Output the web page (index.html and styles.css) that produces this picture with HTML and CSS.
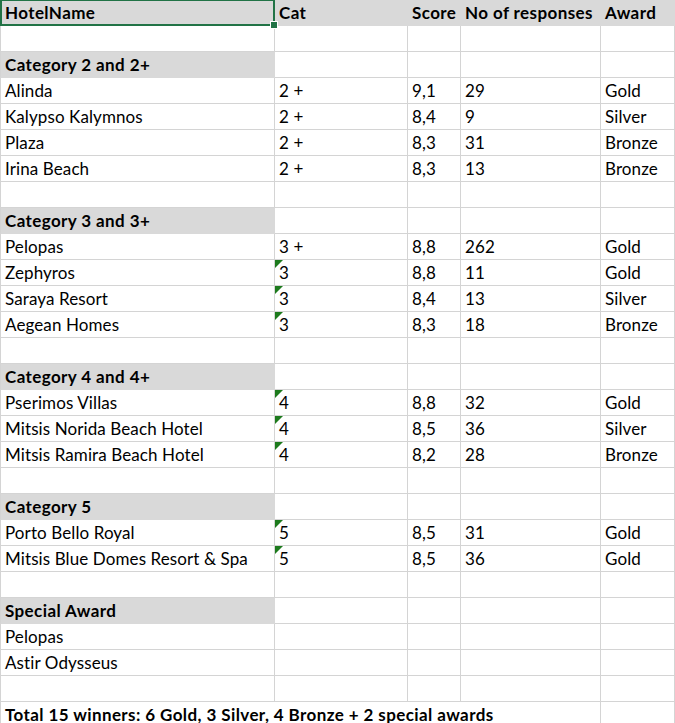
FILE: index.html
```html
<!DOCTYPE html>
<html>
<head>
<meta charset="utf-8">
<link rel="stylesheet" href="styles.css">
</head>
<body>
<div class="sheet">
  <div class="row head">
    <div class="c f b">HotelName</div><div class="c f b">Cat</div><div class="c f b">Score</div><div class="c f b">No of responses</div><div class="c f b">Award</div>
  </div>
  <div class="row"><div class="c"></div><div class="c"></div><div class="c"></div><div class="c"></div><div class="c"></div></div>
  <div class="row"><div class="c f b">Category 2 and 2+</div><div class="c"></div><div class="c"></div><div class="c"></div><div class="c"></div></div>
  <div class="row"><div class="c">Alinda</div><div class="c">2 +</div><div class="c">9,1</div><div class="c">29</div><div class="c">Gold</div></div>
  <div class="row"><div class="c">Kalypso Kalymnos</div><div class="c">2 +</div><div class="c">8,4</div><div class="c">9</div><div class="c">Silver</div></div>
  <div class="row"><div class="c">Plaza</div><div class="c">2 +</div><div class="c">8,3</div><div class="c">31</div><div class="c">Bronze</div></div>
  <div class="row"><div class="c">Irina Beach</div><div class="c">2 +</div><div class="c">8,3</div><div class="c">13</div><div class="c">Bronze</div></div>
  <div class="row"><div class="c"></div><div class="c"></div><div class="c"></div><div class="c"></div><div class="c"></div></div>
  <div class="row"><div class="c f b">Category 3 and 3+</div><div class="c"></div><div class="c"></div><div class="c"></div><div class="c"></div></div>
  <div class="row"><div class="c">Pelopas</div><div class="c">3 +</div><div class="c">8,8</div><div class="c">262</div><div class="c">Gold</div></div>
  <div class="row"><div class="c">Zephyros</div><div class="c t">3</div><div class="c">8,8</div><div class="c">11</div><div class="c">Gold</div></div>
  <div class="row"><div class="c">Saraya Resort</div><div class="c t">3</div><div class="c">8,4</div><div class="c">13</div><div class="c">Silver</div></div>
  <div class="row"><div class="c">Aegean Homes</div><div class="c t">3</div><div class="c">8,3</div><div class="c">18</div><div class="c">Bronze</div></div>
  <div class="row"><div class="c"></div><div class="c"></div><div class="c"></div><div class="c"></div><div class="c"></div></div>
  <div class="row"><div class="c f b">Category 4 and 4+</div><div class="c"></div><div class="c"></div><div class="c"></div><div class="c"></div></div>
  <div class="row"><div class="c">Pserimos Villas</div><div class="c t">4</div><div class="c">8,8</div><div class="c">32</div><div class="c">Gold</div></div>
  <div class="row"><div class="c">Mitsis Norida Beach Hotel</div><div class="c t">4</div><div class="c">8,5</div><div class="c">36</div><div class="c">Silver</div></div>
  <div class="row"><div class="c">Mitsis Ramira Beach Hotel</div><div class="c t">4</div><div class="c">8,2</div><div class="c">28</div><div class="c">Bronze</div></div>
  <div class="row"><div class="c"></div><div class="c"></div><div class="c"></div><div class="c"></div><div class="c"></div></div>
  <div class="row"><div class="c f b">Category 5</div><div class="c"></div><div class="c"></div><div class="c"></div><div class="c"></div></div>
  <div class="row"><div class="c">Porto Bello Royal</div><div class="c t">5</div><div class="c">8,5</div><div class="c">31</div><div class="c">Gold</div></div>
  <div class="row"><div class="c">Mitsis Blue Domes Resort &amp; Spa</div><div class="c t">5</div><div class="c">8,5</div><div class="c">36</div><div class="c">Gold</div></div>
  <div class="row"><div class="c"></div><div class="c"></div><div class="c"></div><div class="c"></div><div class="c"></div></div>
  <div class="row"><div class="c f b">Special Award</div><div class="c"></div><div class="c"></div><div class="c"></div><div class="c"></div></div>
  <div class="row"><div class="c">Pelopas</div><div class="c"></div><div class="c"></div><div class="c"></div><div class="c"></div></div>
  <div class="row"><div class="c">Astir Odysseus</div><div class="c"></div><div class="c"></div><div class="c"></div><div class="c"></div></div>
  <div class="row"><div class="c"></div><div class="c"></div><div class="c"></div><div class="c"></div><div class="c"></div></div>
  <div class="row last"><div class="c b span4">Total 15 winners: 6 Gold, 3 Silver, 4 Bronze + 2 special awards</div><div class="c"></div></div>
  <div class="sel"><span class="handle"></span></div>
</div>
</body>
</html>
```
FILE: styles.css
```css
html, body {
  margin: 0;
  padding: 0;
  background: #ffffff;
}
.sheet {
  position: relative;
  width: 675px;
  height: 723px;
  overflow: hidden;
  font-family: Lato, "Open Sans", sans-serif;
  font-size: 17px;
  letter-spacing: 0.1px;
  color: #000000;
}
.row {
  display: grid;
  grid-template-columns: 275px 133px 53px 140px 1fr;
  height: 26px;
}
.c {
  box-sizing: border-box;
  position: relative;
  height: 26px;
  line-height: 25px;
  padding: 0 0 0 4px;
  border-right: 1px solid #d4d4d4;
  border-bottom: 1px solid #d4d4d4;
  white-space: nowrap;
}
.row .c:first-child {
  border-left: 1px solid #d4d4d4;
  padding-left: 4px;
}
.f {
  background: #d9d9d9;
  border-right-color: #d9d9d9;
  border-bottom-color: #d9d9d9;
}
.b {
  font-weight: bold;
  letter-spacing: 0.4px;
}
.span4 {
  grid-column: span 4;
}
.t::before {
  content: "";
  position: absolute;
  left: 0;
  top: 0;
  width: 0;
  height: 0;
  border-top: 8px solid #1d7b1d;
  border-right: 8px solid transparent;
}
.sel {
  position: absolute;
  left: 0;
  top: -1px;
  width: 275px;
  height: 27px;
  box-sizing: border-box;
  border: 2px solid #217346;
}
.handle {
  position: absolute;
  right: -5px;
  bottom: -5px;
  width: 6px;
  height: 6px;
  background: #217346;
  border: 1px solid #ffffff;
}
```
